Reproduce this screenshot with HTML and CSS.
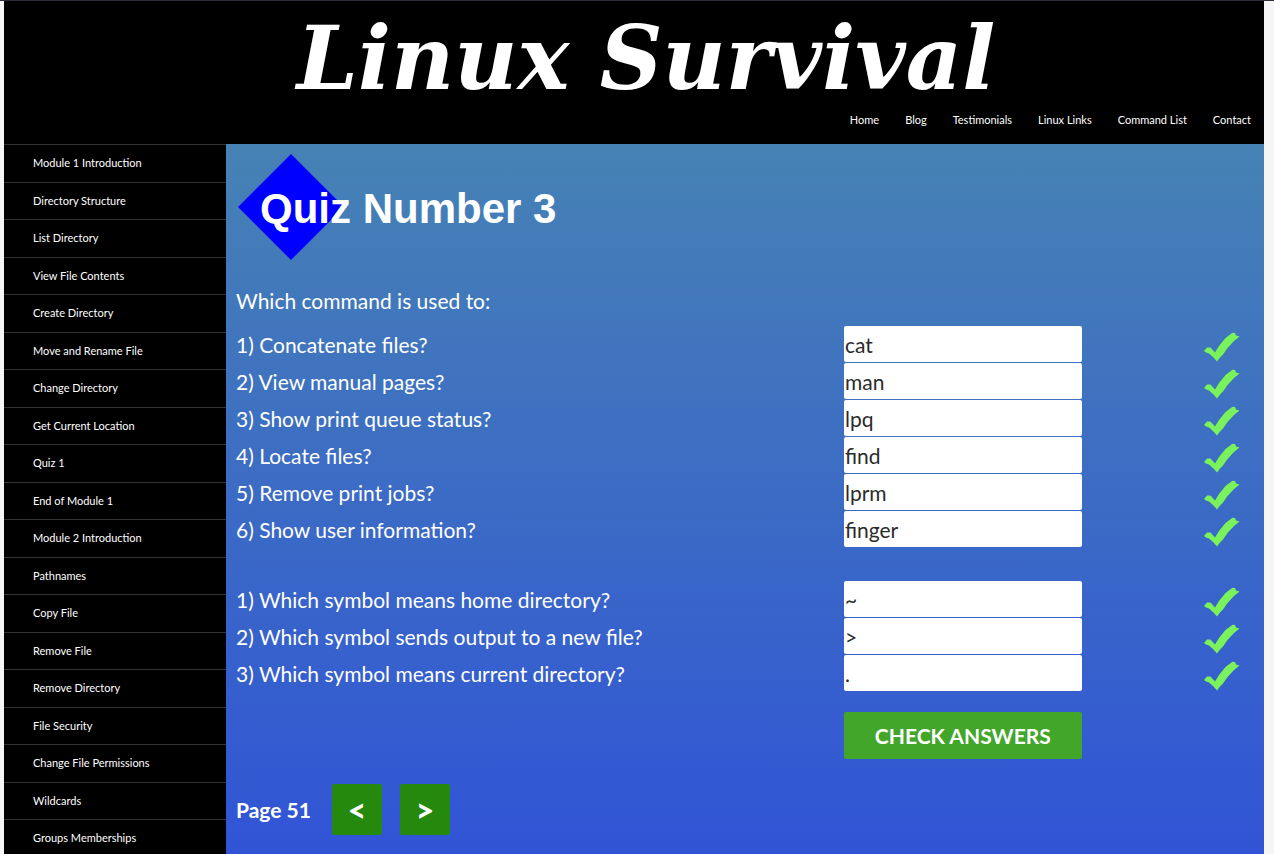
FILE: index.html
```html
<!DOCTYPE html>
<html lang="en">
<head>
<meta charset="utf-8">
<title>Quiz Number 3 - Linux Survival</title>
<link rel="stylesheet" href="styles.css">
</head>
<body>
<svg width="0" height="0" class="defs" aria-hidden="true">
  <symbol id="tick" viewBox="0 0 36 30">
    <path d="M0 19 L3 15.5 L6.500 15.500 L11 20.500 L15 14 L21.500 6 L28.500 0.800 L31 1 L32 3.500 L35.500 4.500 L30 9 L23.500 16 L19 22.500 L16 25.500 L13 29.500 L9.500 25.500 L5 21.500 L2 20.500 Z" fill="#79f25c"/>
  </symbol>
</svg>
<div class="site">
  <header class="header">
    <h1 class="logo">Linux Survival</h1>
    <nav class="topnav" aria-label="Site">
      <a href="#">Home</a>
      <a href="#">Blog</a>
      <a href="#">Testimonials</a>
      <a href="#">Linux Links</a>
      <a href="#">Command List</a>
      <a href="#">Contact</a>
    </nav>
  </header>
  <div class="columns">
    <nav class="sidebar" aria-label="Lessons">
      <a href="#">Module 1 Introduction</a>
      <a href="#">Directory Structure</a>
      <a href="#">List Directory</a>
      <a href="#">View File Contents</a>
      <a href="#">Create Directory</a>
      <a href="#">Move and Rename File</a>
      <a href="#">Change Directory</a>
      <a href="#">Get Current Location</a>
      <a href="#">Quiz 1</a>
      <a href="#">End of Module 1</a>
      <a href="#">Module 2 Introduction</a>
      <a href="#">Pathnames</a>
      <a href="#">Copy File</a>
      <a href="#">Remove File</a>
      <a href="#">Remove Directory</a>
      <a href="#">File Security</a>
      <a href="#">Change File Permissions</a>
      <a href="#">Wildcards</a>
      <a href="#">Groups Memberships</a>
    </nav>
    <main class="main">
      <div class="heading">
        <svg class="diamond" viewBox="0 0 106 106" aria-hidden="true"><path d="M53 0 L106 53 L53 106 L0 53 Z" fill="#0000ff"/></svg>
        <h2>Quiz Number 3</h2>
      </div>
      <p class="intro">Which command is used to:</p>
      <form class="quiz">
        <div class="questions">
          <label for="a1">1) Concatenate files?</label><input id="a1" type="text" value="cat"><svg class="tick"><use href="#tick"/></svg>
          <label for="a2">2) View manual pages?</label><input id="a2" type="text" value="man"><svg class="tick"><use href="#tick"/></svg>
          <label for="a3">3) Show print queue status?</label><input id="a3" type="text" value="lpq"><svg class="tick"><use href="#tick"/></svg>
          <label for="a4">4) Locate files?</label><input id="a4" type="text" value="find"><svg class="tick"><use href="#tick"/></svg>
          <label for="a5">5) Remove print jobs?</label><input id="a5" type="text" value="lprm"><svg class="tick"><use href="#tick"/></svg>
          <label for="a6">6) Show user information?</label><input id="a6" type="text" value="finger"><svg class="tick"><use href="#tick"/></svg>
        </div>
        <div class="questions">
          <label for="b1">1) Which symbol means home directory?</label><input id="b1" type="text" value="~"><svg class="tick"><use href="#tick"/></svg>
          <label for="b2">2) Which symbol sends output to a new file?</label><input id="b2" type="text" value="&gt;"><svg class="tick"><use href="#tick"/></svg>
          <label for="b3">3) Which symbol means current directory?</label><input id="b3" type="text" value="."><svg class="tick"><use href="#tick"/></svg>
        </div>
        <div class="submit"><button class="check" type="button">CHECK ANSWERS</button></div>
      </form>
      <div class="pager">
        <span>Page 51</span>
        <button type="button" aria-label="Previous page">&lt;</button>
        <button type="button" aria-label="Next page">&gt;</button>
      </div>
    </main>
  </div>
</div>
</body>
</html>
```
FILE: styles.css
```css
* { box-sizing: border-box; }

body {
  margin: 0;
  background: #f5f5f5;
  border-top: 1px solid #2c2e36;
  font-family: Lato, sans-serif;
  color: #fff;
}

.defs { position: absolute; }

.site {
  margin: 0 10px 0 4px;
  height: calc(100vh - 1px);
  display: flex;
  flex-direction: column;
  overflow: hidden;
  background: #000;
}

.header {
  flex: none;
  padding: 8px 13px 14px;
}

.logo {
  margin: 0;
  padding-left: 24px;
  text-align: center;
  font: italic bold 87px/100px "DejaVu Serif", serif;
  white-space: nowrap;
}

.topnav {
  display: flex;
  justify-content: flex-end;
  gap: 26px;
  font-size: 11px;
  line-height: 21px;
}

.topnav a,
.sidebar a {
  color: #fff;
  text-decoration: none;
  white-space: nowrap;
}

.columns {
  flex: 1;
  display: flex;
  min-height: 0;
}

.sidebar {
  flex: none;
  width: 222px;
  display: flex;
  flex-direction: column;
  font-size: 11px;
}

.sidebar a {
  flex: none;
  padding-left: 29px;
  border-top: 1px solid #333;
  line-height: 36px;
}

.sidebar a:nth-child(odd) { padding-bottom: 1px; }

.main {
  flex: 1;
  padding: 10px;
  background: linear-gradient(#4682b4, #3154d6);
  font-size: 21px;
}

.heading {
  display: flex;
  align-items: center;
  padding-left: 2px;
}

.diamond {
  flex: none;
  width: 106px;
  height: 106px;
}

.heading h2 {
  position: relative;
  margin: 4px 0 0 -84px;
  font: bold 42px/48px "Liberation Sans", sans-serif;
}

.intro {
  margin: 24px 0 8px;
  line-height: 34px;
}

.questions {
  display: grid;
  grid-template-columns: 608fr 360fr 50fr;
  grid-auto-rows: 36px;
  row-gap: 1px;
  align-items: center;
  margin-bottom: 34px;
}

.questions input {
  width: 66%;
  height: 36px;
  padding: 0 1px;
  border: 0;
  border-radius: 2px;
  background: #fff;
  color: #2b2b2b;
  font: inherit;
}

.tick {
  width: 36px;
  height: 30px;
  margin-top: 6px;
}

.submit {
  display: grid;
  grid-template-columns: 608fr 360fr 50fr;
  margin-top: -13px;
}

.check {
  grid-column: 2;
  width: 66%;
  height: 47px;
  padding: 0;
  border: 0;
  border-radius: 2px;
  background: #41a62a;
  color: #fff;
  font: bold 21px Lato, sans-serif;
}

.pager {
  display: flex;
  align-items: center;
  gap: 18px;
  margin-top: 25px;
  font-weight: bold;
}

.pager span { margin-right: 3px; }

.pager button {
  width: 50px;
  height: 51px;
  padding: 0;
  border: 0;
  border-radius: 2px;
  background: #24890d;
  color: #fff;
  font: 900 32px Lato, sans-serif;
}
```
